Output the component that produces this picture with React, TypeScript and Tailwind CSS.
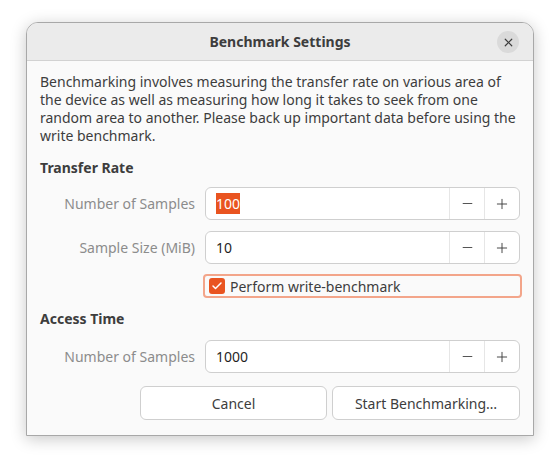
import { Minus, Plus, X, Check } from 'lucide-react';

interface SpinRowProps {
  label: string;
  value: string;
  selected?: boolean;
}

function SpinRow({ label, value, selected }: SpinRowProps) {
  return (
    <div className="flex items-center">
      <div className="w-[165px] pr-[10px] text-right text-[#8c8c8c]">{label}</div>
      <div className="flex h-[33px] flex-1 items-stretch rounded-[6px] border border-[#cfcfcf] bg-white">
        <div className="flex flex-1 items-center pl-[10px] text-[#1f1f1f]">
          {selected ? <span className="bg-[#e95420] text-white">{value}</span> : value}
        </div>
        <div className="flex w-[35px] items-center justify-center border-l border-[#e6e6e6] text-[#3d3d3d]">
          <Minus className="h-[15px] w-[15px]" strokeWidth={1.4} />
        </div>
        <div className="flex w-[35px] items-center justify-center border-l border-[#e6e6e6] text-[#3d3d3d]">
          <Plus className="h-[16px] w-[16px]" strokeWidth={1.4} />
        </div>
      </div>
    </div>
  );
}

export default function App() {
  return (
    <div className="h-[463px] w-[560px] bg-white pl-[26px] pt-[22px] font-['Noto_Sans',sans-serif] text-[14px] text-[#3d3d3d]">
      <div className="flex h-[414px] w-[508px] flex-col overflow-hidden rounded-t-[12px] border border-[#a8a8a8] bg-[#fafafa] shadow-[0_3px_16px_rgba(0,0,0,0.22)]">
        <div className="relative flex h-[38px] shrink-0 items-center justify-center border-b border-[#d2d2d2] bg-[#ebebeb]">
          <span className="font-bold">Benchmark Settings</span>
          <div className="absolute right-[14px] top-[8px] flex h-[22px] w-[22px] items-center justify-center rounded-full bg-[#dadada]">
            <X className="h-[13px] w-[13px]" strokeWidth={2.2} />
          </div>
        </div>

        <div className="flex flex-col px-[13px] pt-[12px]">
          <p className="leading-[18px]">
            Benchmarking involves measuring the transfer rate on various area of
            <br />
            the device as well as measuring how long it takes to seek from one
            <br />
            random area to another. Please back up important data before using the
            <br />
            write benchmark.
          </p>

          <div className="mt-[12px] font-bold">Transfer Rate</div>

          <div className="mt-[9px] flex flex-col gap-[11px]">
            <SpinRow label="Number of Samples" value="100" selected />
            <SpinRow label="Sample Size (MiB)" value="10" />
          </div>

          <div className="mt-[10px] -mr-[2px] flex">
            <div className="w-[163px]" />
            <div className="flex h-[24px] flex-1 items-center gap-[5px] rounded-[4px] border-2 border-[#f3a58a] pl-[4px]">
              <div className="flex h-[16px] w-[16px] items-center justify-center rounded-[3px] bg-[#e95420]">
                <Check className="h-[12px] w-[12px] text-white" strokeWidth={3} />
              </div>
              <span>Perform write-benchmark</span>
            </div>
          </div>

          <div className="mt-[10px] font-bold">Access Time</div>

          <div className="mt-[11px]">
            <SpinRow label="Number of Samples" value="1000" />
          </div>

          <div className="mt-[13px] flex justify-end gap-[5px]">
            <div className="flex h-[34px] w-[187px] items-center justify-center rounded-[6px] border border-[#cfcfcf] bg-white">
              Cancel
            </div>
            <div className="flex h-[34px] w-[188px] items-center justify-center rounded-[6px] border border-[#cfcfcf] bg-white">
              Start Benchmarking…
            </div>
          </div>
        </div>
      </div>
    </div>
  );
}
